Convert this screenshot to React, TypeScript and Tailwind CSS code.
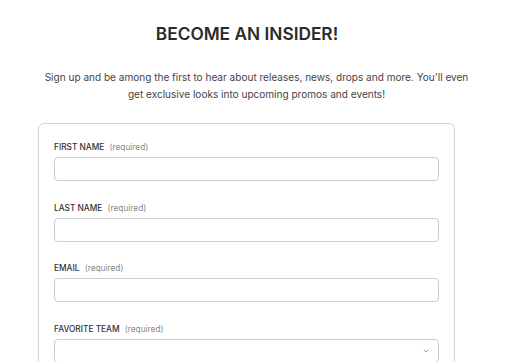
import { ChevronDown } from "lucide-react";

const fields = [
  { label: "FIRST NAME", select: false },
  { label: "LAST NAME", select: false },
  { label: "EMAIL", select: false },
  { label: "FAVORITE TEAM", select: true },
];

export default function App() {
  return (
    <div className="min-h-screen bg-white font-['Inter',sans-serif] text-[#333]">
      <div className="mx-auto w-[513px] pt-[23px]">
        <h1 className="pr-[19px] text-center text-[17.3px] font-semibold leading-[22px] text-[#2b2b2b]">BECOME AN INSIDER!</h1>
        <p className="mx-auto mt-[24px] w-[436px] text-center text-[10.05px] leading-[17px] text-[#444]">
          Sign up and be among the first to hear about releases, news, drops and more. You'll even get exclusive looks into upcoming promos and events!
        </p>
        <form className="ml-[38px] mt-[20px] w-[417px] rounded-[6px] border border-[#d4d4d4] px-[15px] pt-[17px] pb-4">
          {fields.map(({ label, select }) => (
            <div key={label} className="mb-[20.6px]">
              <label className="block text-[8.3px] font-medium leading-[12px] text-[#333]">
                {label} <span className="ml-[3px] font-normal text-[#888]">(required)</span>
              </label>
              <div className="relative mt-[4px] h-[24px] w-[385px] rounded-[4px] border border-[#ccc]">
                {select && <ChevronDown size={8} strokeWidth={2} className="absolute right-[8px] top-[7px] text-[#666]" />}
              </div>
            </div>
          ))}
        </form>
      </div>
    </div>
  );
}
